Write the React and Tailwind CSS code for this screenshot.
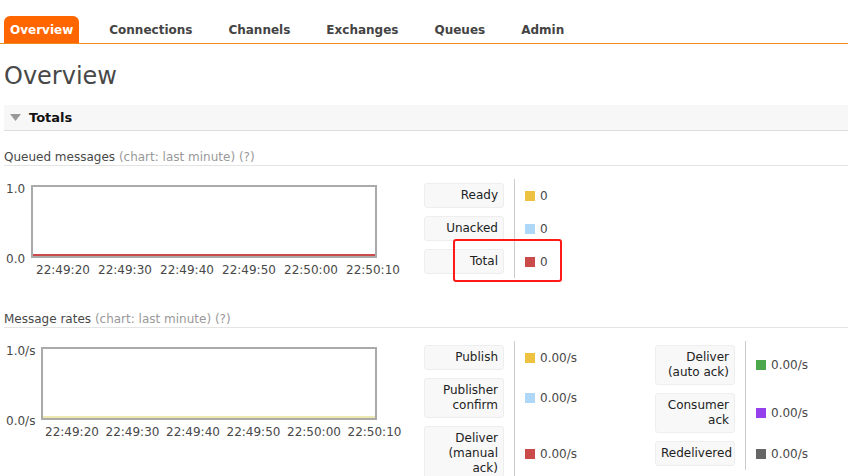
import React from "react";

const tabs = ["Overview", "Connections", "Channels", "Exchanges", "Queues", "Admin"];
const times = ["22:49:20", "22:49:30", "22:49:40", "22:49:50", "22:50:00", "22:50:10"];

const LegendRow = ({ label, color, value, valueWidth = "w-[120px]" }) => (
  <div className="flex items-stretch">
    <div className="py-1 pr-[10px]">
      <div className="w-[80px] bg-[#f8f8f8] border border-[#eeeeee] rounded-[3px] px-[5px] py-[4px] text-right text-[12px] leading-[15px] text-[#222]">
        {label}
      </div>
    </div>
    <div className={`${valueWidth} border-l border-[#cccccc] pl-[10px] flex items-center`}>
      <span className={`w-[10px] h-[10px] mr-[5px] ${color}`} />
      <span className="text-[12px] text-[#484848]">{value}</span>
    </div>
  </div>
);

const SectionTitle = ({ title }) => (
  <div className="border-b border-[#e4e4e4] pb-[1px] text-[12px] leading-[14px] text-[#484848]">
    {title} <span className="text-[#999]">(chart: last minute)</span>{" "}
    <span className="text-[#999]">(?)</span>
  </div>
);

const Chart = ({ top, bottom, lineColor, boxWidth, labelWidth, timesPad, timeWidth }) => (
  <div className="flex flex-col">
    <div className="flex">
      <div className={`${labelWidth} flex flex-col justify-between text-[12px] text-[#484848] leading-[14px] pl-[2px]`}>
        <span className="-mt-[3px]">{top}</span>
        <span className="-mb-[8px]">{bottom}</span>
      </div>
      <div className={`${boxWidth} h-[73px] border-2 border-[#aaaaaa] flex flex-col justify-end`}>
        <div className={`h-[2px] ${lineColor}`} />
      </div>
    </div>
    <div className={`flex ${timesPad} mt-[3px] text-[12px] text-[#484848]`}>
      {times.map((t) => (
        <span key={t} className={`${timeWidth} shrink-0`}>{t}</span>
      ))}
    </div>
  </div>
);

export default function App() {
  return (
    <div className="w-[848px] h-[476px] overflow-hidden bg-white font-['DejaVu_Sans','Verdana',sans-serif] text-[#484848]">
      {/* Tabs */}
      <div className="pt-[16px] pl-[4px] border-b border-[#f08c1c] flex items-end">
        {tabs.map((t, i) => (
          <div
            key={t}
            className={
              i === 0
                ? "bg-[#ff6600] text-white rounded-t-[6px] px-[6px] h-[27px] flex items-center text-[12px] font-bold"
                : "ml-[24px] px-[6px] h-[27px] flex items-center text-[12px] font-bold text-[#444]"
            }
          >
            {t}
          </div>
        ))}
      </div>

      <div className="pl-[4px]">
        <h1 className="text-[24px] text-[#484848] mt-[17px] leading-[30px]">Overview</h1>

        {/* Totals */}
        <div className="mt-[14px] h-[26px] bg-[#f7f7f7] border-b border-[#dddddd] flex items-center pl-[6px]">
          <svg width="11" height="7" viewBox="0 0 11 7" className="mr-[8px]">
            <polygon points="0,0 11,0 5.5,7" fill="#999" />
          </svg>
          <span className="text-[13px] font-bold text-[#111]">Totals</span>
        </div>

        <div className="mt-[19px]">
          <SectionTitle title="Queued messages" />
        </div>

        <div className="flex mt-[13px]">
          <div className="w-[420px] pt-[6px]">
            <Chart top="1.0" bottom="0.0" lineColor="bg-[#cb4b4b]" boxWidth="w-[346px]" labelWidth="w-[27px]" timesPad="pl-[32px]" timeWidth="w-[62px]" />
          </div>
          <div className="relative">
            <LegendRow label="Ready" color="bg-[#edc240]" value="0" />
            <LegendRow label="Unacked" color="bg-[#afd8f8]" value="0" />
            <LegendRow label="Total" color="bg-[#cb4b4b]" value="0" />
            <div className="absolute left-[29px] top-[60px] w-[109px] h-[43px] border-2 border-[#ff1a1a] rounded-[3px]" />
          </div>
        </div>

        <div className="mt-[33px]">
          <SectionTitle title="Message rates" />
        </div>

        <div className="flex mt-[13px]">
          <div className="w-[420px] pt-[6px]">
            <Chart top="1.0/s" bottom="0.0/s" lineColor="bg-[#ece8b0]" boxWidth="w-[336px]" labelWidth="w-[37px]" timesPad="pl-[41px]" timeWidth="w-[60.5px]" />
          </div>
          <div className="flex items-start">
            <div>
              <LegendRow label="Publish" color="bg-[#edc240]" value="0.00/s" valueWidth="w-[141px]" />
              <LegendRow label={<>Publisher<br />confirm</>} color="bg-[#afd8f8]" value="0.00/s" valueWidth="w-[141px]" />
              <LegendRow label={<>Deliver<br />(manual<br />ack)</>} color="bg-[#cb4b4b]" value="0.00/s" valueWidth="w-[141px]" />
            </div>
            <div>
              <LegendRow label={<>Deliver<br />(auto ack)</>} color="bg-[#4da74d]" value="0.00/s" valueWidth="w-[90px]" />
              <LegendRow label={<>Consumer<br />ack</>} color="bg-[#9440ed]" value="0.00/s" valueWidth="w-[90px]" />
              <LegendRow label="Redelivered" color="bg-[#666666]" value="0.00/s" valueWidth="w-[90px]" />
            </div>
          </div>
        </div>
      </div>
    </div>
  );
}
